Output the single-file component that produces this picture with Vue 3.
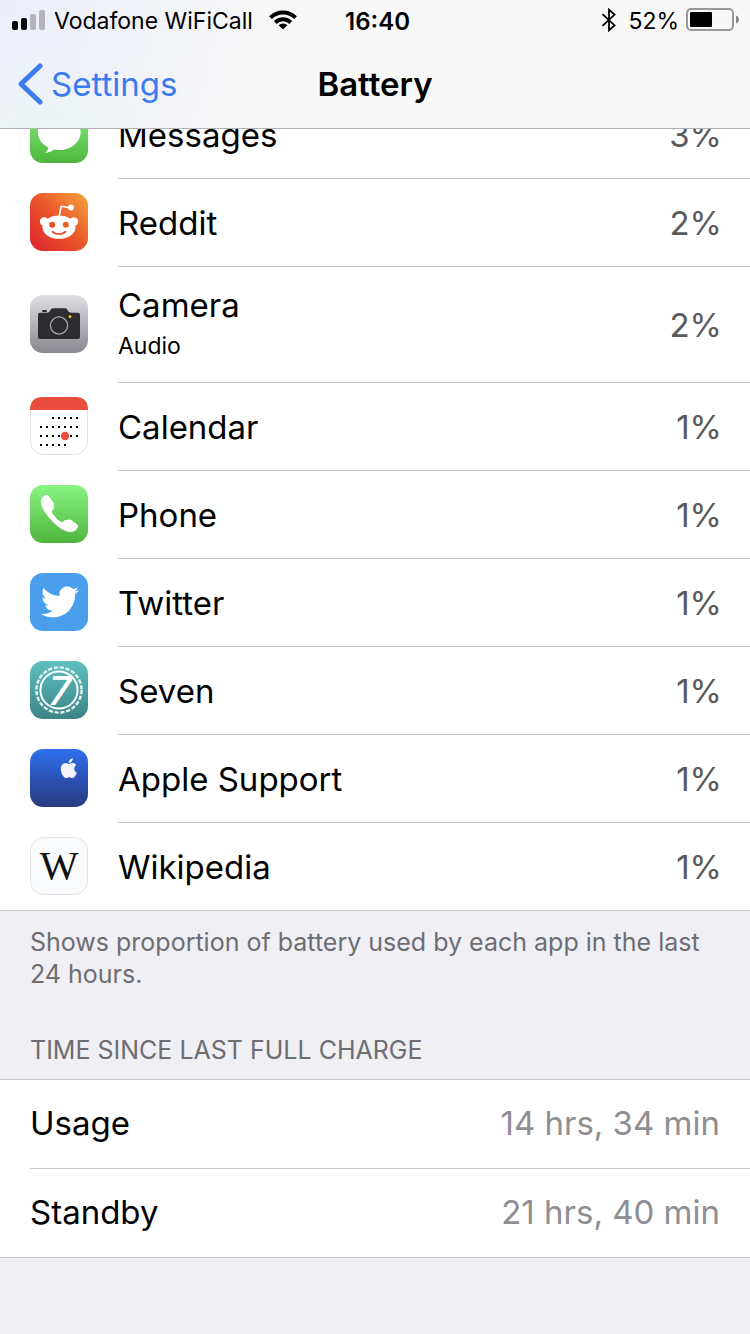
<script setup>
import { ref } from 'vue'

const apps = ref([
  { id: 'messages', name: 'Messages', percent: 3 },
  { id: 'reddit', name: 'Reddit', percent: 2 },
  { id: 'camera', name: 'Camera', detail: 'Audio', percent: 2 },
  { id: 'calendar', name: 'Calendar', percent: 1 },
  { id: 'phone', name: 'Phone', percent: 1 },
  { id: 'twitter', name: 'Twitter', percent: 1 },
  { id: 'seven', name: 'Seven', percent: 1 },
  { id: 'support', name: 'Apple Support', percent: 1 },
  { id: 'wikipedia', name: 'Wikipedia', percent: 1 }
])

const times = ref([
  { label: 'Usage', value: '14 hrs, 34 min' },
  { label: 'Standby', value: '21 hrs, 40 min' }
])

// Calendar icon: one dot per day, [x, y]
const days = []
for (let row = 0; row < 4; row++) {
  for (let col = 0; col < 7; col++) {
    if (row === 0 && col < 2) continue
    if (row === 3 && col > 4) continue
    days.push([10 + col * 6, 20 + row * 9])
  }
}
</script>

<template>
  <div class="screen">
    <header class="top">
      <div class="status">
        <div class="status-left">
          <svg class="signal" width="34" height="22" viewBox="0 0 34 22">
            <rect x="0" y="12" width="6" height="9" rx="2" />
            <rect x="9" y="9" width="6" height="12" rx="2" />
            <rect x="18" y="5" width="6" height="16" rx="2" fill="#b4b4b8" />
            <rect x="27" y="1" width="6" height="20" rx="2" fill="#b4b4b8" />
          </svg>
          <span>Vodafone WiFiCall</span>
          <svg class="wifi" width="28" height="22" viewBox="0 0 28 22">
            <g fill="none" stroke="#000" stroke-width="4">
              <path d="M1.500 8.600a17.700 17.700 0 0 1 25 0" />
              <path d="M6.200 13.500a11 11 0 0 1 15.600 0" />
            </g>
            <path d="M14 20.600l-4.400-4.300a6.300 6.300 0 0 1 8.800 0z" />
          </svg>
        </div>
        <span class="clock">16:40</span>
        <div class="status-right">
          <svg width="16" height="24" viewBox="0 0 16 24">
            <path d="M1.500 6.200L13.600 17.400L8 22.300V1.700L13.600 6.600L1.500 17.800" fill="none" stroke="#000" stroke-width="1.800" />
          </svg>
          <span class="charge">52%</span>
          <svg width="53" height="24" viewBox="0 0 53 24">
            <rect x="1" y="1" width="46" height="21" rx="4" fill="none" stroke="#98989a" stroke-width="2" />
            <rect x="4" y="4" width="22" height="15" rx="1" />
            <path d="M50 7.500q3 1.200 3 4t-3 4z" fill="#88888a" />
          </svg>
        </div>
      </div>
      <nav class="nav">
        <a href="#" class="back">
          <svg width="25" height="42" viewBox="0 0 25 42">
            <path d="M22 3L3 21L22 39" fill="none" stroke="#3a7bf0" stroke-width="5" stroke-linecap="round" stroke-linejoin="round" />
          </svg>
          <span>Settings</span>
        </a>
        <h1>Battery</h1>
      </nav>
    </header>

    <main>
      <ul class="apps">
        <li v-for="app in apps" :key="app.id" class="app">
          <svg class="icon" width="58" height="58" viewBox="0 0 58 58">
            <defs>
              <linearGradient id="green" x1="0" y1="0" x2="0" y2="1">
                <stop offset="0" stop-color="#88f482" />
                <stop offset="1" stop-color="#4fb53d" />
              </linearGradient>
              <linearGradient id="orange" x1="0" y1="1" x2="1" y2="0">
                <stop offset="0" stop-color="#dc2330" />
                <stop offset="0.5" stop-color="#ea5429" />
                <stop offset="1" stop-color="#f2a83f" />
              </linearGradient>
              <linearGradient id="silver" x1="0" y1="0" x2="0" y2="1">
                <stop offset="0" stop-color="#dfdfe4" />
                <stop offset="1" stop-color="#89888e" />
              </linearGradient>
              <linearGradient id="teal" x1="0" y1="0" x2="0" y2="1">
                <stop offset="0" stop-color="#5fc0c0" />
                <stop offset="1" stop-color="#3c8486" />
              </linearGradient>
              <linearGradient id="blue" x1="0" y1="0" x2="0" y2="1">
                <stop offset="0" stop-color="#2f70ee" />
                <stop offset="0.55" stop-color="#2b50b0" />
                <stop offset="1" stop-color="#283c80" />
              </linearGradient>
            </defs>

            <g v-if="app.id === 'messages'">
              <rect width="58" height="58" rx="13" fill="url(#green)" />
              <path d="M29.3 9.5c11.8 0 21.3 7.8 21.3 17.7S41 45 29.3 45c-1.9 0-3.7-.2-5.5-.6-2.2 1.7-5 3-8.6 3.300c1.600-1.300 2.800-3 3.300-5.200C12.200 39.400 8 33.700 8 27.200 8 17.300 17.500 9.500 29.300 9.500z" fill="#fff" />
            </g>

            <g v-else-if="app.id === 'reddit'">
              <rect width="58" height="58" rx="13" fill="url(#orange)" />
              <path d="M29 24l2.300-10.800L41 15" fill="none" stroke="#fff" stroke-width="1.600" stroke-linejoin="round" />
              <g fill="#fff">
                <circle cx="41" cy="14.600" r="3" />
                <circle cx="14.200" cy="28.600" r="4.300" />
                <circle cx="43.800" cy="28.600" r="4.300" />
                <ellipse cx="29" cy="34.200" rx="16.500" ry="11.600" />
              </g>
              <circle cx="22.200" cy="31.800" r="3" fill="#e7502a" />
              <circle cx="35.800" cy="31.800" r="3" fill="#e9642c" />
              <path d="M22.500 38.800q6.500 4.800 13 0" fill="none" stroke="#e5482a" stroke-width="1.700" stroke-linecap="round" />
            </g>

            <g v-else-if="app.id === 'camera'">
              <rect width="58" height="58" rx="13" fill="url(#silver)" />
              <rect x="12" y="15" width="5" height="2" rx="1" fill="#2d2d2f" />
              <path d="M10 17.700h6.500c2.500 0 3-.900 4-2.700.700-1.200 1.500-1.700 3-1.700h11c1.500 0 2.300.500 3 1.700 1 1.800 1.500 2.700 4 2.700H48q2 0 2 2V42q0 2-2 2H10q-2 0-2-2V19.700q0-2 2-2z" fill="#2d2d2f" />
              <circle cx="29" cy="30.500" r="8.600" fill="none" stroke="#a9a9ad" stroke-width="1.300" />
              <circle cx="40" cy="21.500" r="1.500" fill="#f3b62d" />
            </g>

            <g v-else-if="app.id === 'calendar'">
              <rect x="0.500" y="0.500" width="57" height="57" rx="13" fill="#fff" stroke="#e2e2e4" />
              <path d="M0 13Q0 0 13 0H45Q58 0 58 13z" fill="#e84d3d" />
              <rect v-for="(day, i) in days" :key="i" :x="day[0]" :y="day[1]" width="2" height="2" />
              <circle cx="35" cy="39" r="4.200" fill="#e84d3d" />
            </g>

            <g v-else-if="app.id === 'phone'">
              <rect width="58" height="58" rx="13" fill="url(#green)" />
              <path d="M15.200 10.200C12.700 11.200 10.800 13.300 10.800 16.300c0 3.500 2 7.800 5 12.200 3.500 5.200 8.500 10.300 13.500 13.900 4.500 3.200 9.200 5 12.700 4.500 2.700-.400 4.700-2.300 5.800-4.700.500-1.200.400-2-.600-2.700l-5.200-4c-1.200-.900-2.200-1-3.600-.800l-2.800.400c-1 .200-1.500.600-2.300 1.400-.900.900-1.700 1-2.700.300-3.300-2.500-6.100-5.400-8.200-8.600-.700-1.100-.700-1.900.100-2.800.700-.800 1.100-1.300 1.100-2.300l.300-2.900c.100-1.300-.100-2.200-.900-3.300l-4.300-5.900c-.900-1.100-2.200-1.300-3.500-.800z" fill="#fff" />
            </g>

            <g v-else-if="app.id === 'twitter'">
              <rect width="58" height="58" rx="13" fill="#4a9eec" />
              <path transform="translate(11 10) scale(1.580)" d="M23.953 4.570a10 10 0 0 1-2.825.775 4.958 4.958 0 0 0 2.163-2.723c-.951.555-2.005.959-3.127 1.184a4.920 4.920 0 0 0-8.384 4.482C7.690 8.095 4.067 6.130 1.640 3.162a4.822 4.822 0 0 0-.666 2.475c0 1.710.870 3.213 2.188 4.096a4.904 4.904 0 0 1-2.228-.616v.060a4.923 4.923 0 0 0 3.946 4.827 4.996 4.996 0 0 1-2.212.085 4.936 4.936 0 0 0 4.604 3.417 9.867 9.867 0 0 1-6.102 2.105c-.390 0-.779-.023-1.170-.067a13.995 13.995 0 0 0 7.557 2.209c9.053 0 13.998-7.496 13.998-13.985 0-.210 0-.420-.015-.630A9.935 9.935 0 0 0 24 4.590z" fill="#fff" />
            </g>

            <g v-else-if="app.id === 'seven'">
              <rect width="58" height="58" rx="13" fill="url(#teal)" />
              <circle cx="29" cy="29" r="22.600" fill="none" stroke="#e3f4f4" stroke-width="2.400" stroke-dasharray="4.300 1.617" />
              <circle cx="29" cy="29" r="18.600" fill="none" stroke="#fff" stroke-width="2" />
              <text x="30" y="44" class="seven">7</text>
            </g>

            <g v-else-if="app.id === 'support'">
              <rect width="58" height="58" rx="13" fill="url(#blue)" />
              <path transform="translate(29 9.300) scale(0.820)" d="M12.152 6.896c-.948 0-2.415-1.078-3.960-1.040-2.040.027-3.910 1.183-4.961 3.014-2.117 3.675-.546 9.103 1.519 12.090 1.013 1.454 2.208 3.090 3.792 3.039 1.520-.065 2.090-.987 3.935-.987 1.831 0 2.350.987 3.960.948 1.637-.026 2.676-1.480 3.676-2.948 1.156-1.688 1.636-3.325 1.662-3.415-.039-.013-3.182-1.221-3.220-4.857-.026-3.040 2.480-4.494 2.597-4.559-1.429-2.090-3.623-2.324-4.390-2.376-2-.156-3.675 1.090-4.610 1.090zM15.530 3.830c.843-1.012 1.400-2.427 1.245-3.830-1.207.052-2.662.805-3.532 1.818-.780.896-1.454 2.338-1.273 3.714 1.338.104 2.715-.688 3.559-1.701z" fill="#f3f4f8" />
            </g>

            <g v-else>
              <rect x="0.500" y="0.500" width="57" height="57" rx="13" fill="#fafbfd" stroke="#e2e3e6" />
              <text x="29" y="42" class="wiki">W</text>
            </g>
          </svg>
          <div class="app-body" :class="{ tall: app.detail }">
            <div class="app-text">
              <span class="name">{{ app.name }}</span>
              <span v-if="app.detail" class="detail">{{ app.detail }}</span>
            </div>
            <span class="percent">{{ app.percent }}%</span>
          </div>
        </li>
      </ul>

      <p class="note">Shows proportion of battery used by each app in the last 24 hours.</p>

      <h2>TIME SINCE LAST FULL CHARGE</h2>
      <dl class="times">
        <div v-for="time in times" :key="time.label" class="time">
          <dt>{{ time.label }}</dt>
          <dd>{{ time.value }}</dd>
        </div>
      </dl>
    </main>
  </div>
</template>

<style>
body {
  background: #efeff4;
}
</style>

<style scoped>
.screen {
  min-height: 100vh;
  background: #efeff4;
  color: #000;
  font-family: Inter, "Liberation Sans", sans-serif;
  font-size: 33px;
}

.top {
  position: sticky;
  top: 0;
  z-index: 1;
  border-bottom: 1px solid #b2b2b4;
  background:
    radial-gradient(circle at 0 0, rgba(233, 238, 251, 0.8), transparent 260px),
    radial-gradient(circle at 50px 150px, rgba(236, 249, 236, 0.8), transparent 110px),
    linear-gradient(90deg, #f4f4f6, #f8f8f9 50%);
}

.status {
  display: grid;
  grid-template-columns: 1fr auto 1fr;
  align-items: center;
  height: 40px;
  padding: 0 11px 0 12px;
  font-size: 23px;
}

.status span {
  padding-top: 2px;
}

.status-left,
.status-right {
  display: flex;
  align-items: center;
}

.status-left {
  gap: 8px;
}

.wifi {
  margin-left: 8px;
}

.status-right {
  justify-content: flex-end;
  gap: 7px;
}

.charge {
  margin-left: 4px;
}

.clock {
  font-size: 24px;
  font-weight: 600;
  padding-left: 4px;
}

.nav {
  display: grid;
  grid-template-columns: 1fr auto 1fr;
  align-items: center;
  height: 88px;
  padding: 0 18px;
}

.back {
  display: flex;
  align-items: center;
  gap: 8px;
  color: #3a7bf0;
  text-decoration: none;
}

h1 {
  margin: 0;
  font-size: 33px;
  font-weight: 600;
}

/* the list is scrolled partly under the bar */
main {
  margin-top: -38px;
}

.apps {
  margin: 0;
  padding: 0;
  list-style: none;
  background: #fff;
  border-bottom: 1px solid #c8c7cc;
}

.app {
  display: flex;
  align-items: center;
  padding-left: 30px;
}

.icon {
  flex: none;
  margin: 0 30px 2px 0;
}

.app-body {
  flex: 1;
  display: flex;
  justify-content: space-between;
  align-items: center;
  min-height: 87px;
  padding-right: 28px;
  border-bottom: 1px solid #c8c7cc;
}

.app:last-child .app-body {
  border-bottom: none;
}

.tall {
  min-height: 115px;
}

.app-text {
  display: flex;
  flex-direction: column;
  gap: 6px;
}

.name {
  line-height: 40px;
}

.detail {
  padding-bottom: 3px;
  font-size: 23px;
  line-height: 30px;
}

.percent {
  color: #5a5a5e;
}

.note {
  margin: 0;
  padding: 15px 30px 0;
  color: #6d6d72;
  font-size: 25px;
  line-height: 32px;
}

h2 {
  margin: 0;
  padding: 44px 30px 13px;
  color: #6d6d72;
  font-size: 25px;
  font-weight: 400;
  line-height: 32px;
}

.times {
  margin: 0;
  padding-left: 30px;
  background: #fff;
  border-top: 1px solid #c8c7cc;
  border-bottom: 1px solid #c8c7cc;
}

.time {
  display: flex;
  justify-content: space-between;
  align-items: center;
  min-height: 86px;
  padding: 0 30px 2px 0;
}

.time + .time {
  border-top: 1px solid #c8c7cc;
}

dd {
  margin: 0;
  color: #8e8e93;
}

.seven {
  fill: #fff;
  font-family: Inter, "Liberation Sans", sans-serif;
  font-size: 40px;
  font-style: italic;
  font-weight: 500;
  text-anchor: middle;
}

.wiki {
  fill: #111;
  font-family: "Liberation Serif", serif;
  font-size: 41px;
  text-anchor: middle;
}
</style>
